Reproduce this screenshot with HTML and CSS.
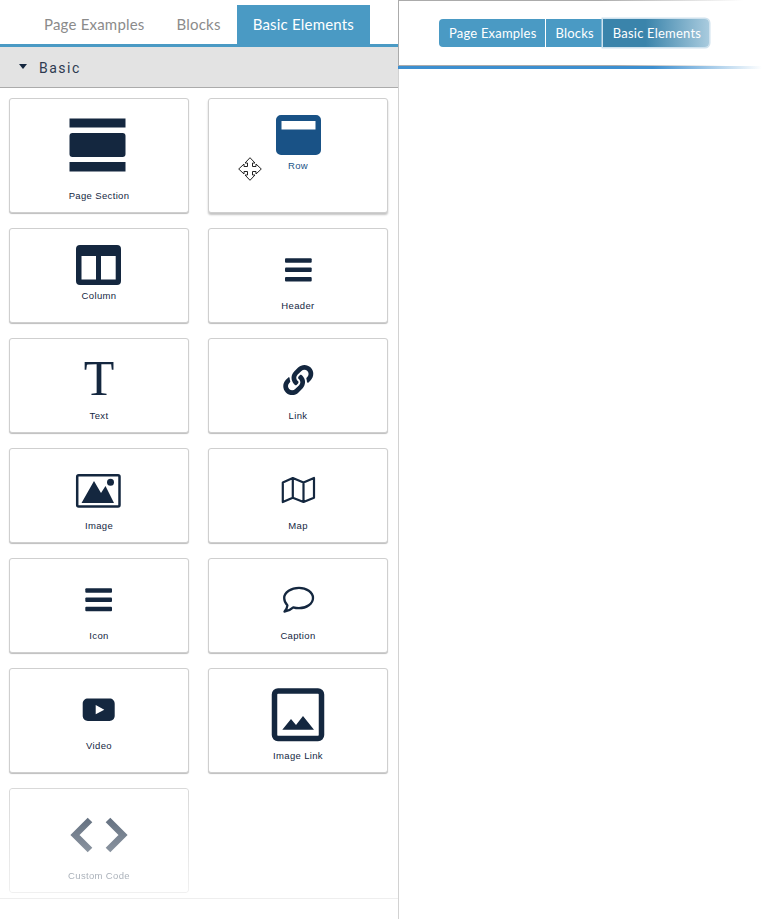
FILE: index.html
```html
<!DOCTYPE html>
<html lang="en">
<head>
<meta charset="utf-8">
<title>Basic Elements</title>
<link rel="stylesheet" href="styles.css">
</head>
<body>
<div class="app">
  <aside class="panel">
    <nav class="tabs">
      <a class="tab">Page Examples</a>
      <a class="tab">Blocks</a>
      <a class="tab tab-active">Basic Elements</a>
    </nav>
    <header class="section-head"><span class="caret"></span><span class="section-title">Basic</span></header>
    <div class="grid">
      <div class="card">
        <svg class="ico" width="60" height="70" viewBox="69 115 60 70"><rect x="69.5" y="118.5" width="56" height="9"/><rect x="69.5" y="133" width="56" height="24" rx="3"/><rect x="69.5" y="162" width="56" height="9.5"/></svg>
        <span class="label">Page Section</span>
      </div>
      <div class="card card-drag">
        <svg class="ico-row" width="60" height="40" viewBox="268 115 60 40"><path fill-rule="evenodd" d="M281 115h35a5 5 0 0 1 5 5v30a5 5 0 0 1-5 5h-35a5 5 0 0 1-5-5v-30a5 5 0 0 1 5-5zM281.500 121v8.500h34V121z"/></svg>
        <span class="label label-row">Row</span>
        <svg class="move" width="24" height="24" viewBox="0 0 24 24"><path d="M12 .7 17 6H14.500V9.500H18V7L23.300 12 18 17V14.500H14.500V18H17L12 23.300 7 18H9.500V14.500H6V17L.7 12 6 7V9.500H9.500V6H7Z"/></svg>
      </div>
      <div class="card">
        <svg class="ico" width="60" height="40" viewBox="69 245 60 40"><path fill-rule="evenodd" d="M80 245h37a4 4 0 0 1 4 4v32a4 4 0 0 1-4 4H80a4 4 0 0 1-4-4v-32a4 4 0 0 1 4-4zM81.500 256v23.500H96V256zM101 256v23.500h14.700V256z"/></svg>
        <span class="label">Column</span>
      </div>
      <div class="card">
        <svg class="ico" width="60" height="50" viewBox="268 245 60 50"><rect x="285" y="258.300" width="26.700" height="4.400" rx="1"/><rect x="285" y="267.500" width="26.700" height="4.600" rx="1"/><rect x="285" y="277" width="26.700" height="4.400" rx="1"/></svg>
        <span class="label">Header</span>
      </div>
      <div class="card">
        <div class="ico-t">T</div>
        <span class="label">Text</span>
      </div>
      <div class="card">
        <svg class="ico" width="60" height="50" viewBox="268 355 60 50"><g transform="translate(283.300 365) scale(.0586)"><path d="M326.612 185.391c59.747 59.809 58.927 155.698.36 214.590-.11.12-.24.25-.36.37l-67.200 67.200c-59.270 59.270-155.699 59.262-214.960 0-59.270-59.260-59.270-155.700 0-214.960l37.106-37.106c9.840-9.840 26.786-3.300 27.294 10.606.648 17.722 3.826 35.527 9.690 52.721 1.986 5.822.567 12.262-3.783 16.612l-13.087 13.087c-28.026 28.026-28.905 73.660-1.155 101.960 28.024 28.579 74.086 28.749 102.325.51l67.200-67.190c28.191-28.191 28.073-73.757 0-101.830-3.701-3.694-7.429-6.564-10.341-8.569a16.037 16.037 0 0 1-6.947-12.606c-.396-10.567 3.348-21.456 11.698-29.806l21.054-21.055c5.521-5.521 14.182-6.199 20.584-1.731a152.482 152.482 0 0 1 20.522 17.197zM467.547 44.449c-59.261-59.262-155.690-59.270-214.960 0l-67.200 67.200c-.12.12-.25.25-.36.37-58.566 58.892-59.387 154.781.36 214.590a152.454 152.454 0 0 0 20.521 17.196c6.402 4.468 15.064 3.789 20.584-1.731l21.054-21.055c8.350-8.350 12.094-19.239 11.698-29.806a16.037 16.037 0 0 0-6.947-12.606c-2.912-2.005-6.640-4.875-10.341-8.569-28.073-28.073-28.191-73.639 0-101.830l67.200-67.190c28.239-28.239 74.300-28.069 102.325.51 27.750 28.300 26.872 73.934-1.155 101.960l-13.087 13.087c-4.350 4.350-5.769 10.790-3.783 16.612 5.864 17.194 9.042 34.999 9.690 52.721.509 13.906 17.454 20.446 27.294 10.606l37.106-37.106c59.271-59.259 59.271-155.699.001-214.959z"/></g></svg>
        <span class="label">Link</span>
      </div>
      <div class="card">
        <svg class="ico" width="60" height="50" viewBox="69 465 60 50"><rect class="line" x="77.200" y="475.200" width="42.300" height="31.300" rx="1.500" stroke-width="2.500"/><path d="M81.500 503 94 481 101 493 105.500 486 114 503z"/><circle cx="110.500" cy="482.300" r="3.500"/></svg>
        <span class="label">Image</span>
      </div>
      <div class="card">
        <svg class="ico" width="60" height="50" viewBox="268 465 60 50"><path class="line" stroke-width="2.200" stroke-linejoin="round" d="M282.800 482.500 292.800 478 303.500 482.500 314 478V497.700L303.500 502 292.800 497.700 282.800 502zM292.800 478V497.700M303.500 482.500V502"/></svg>
        <span class="label">Map</span>
      </div>
      <div class="card">
        <svg class="ico" width="60" height="50" viewBox="69 575 60 50"><rect x="85.300" y="588.300" width="26.700" height="4.400" rx="1"/><rect x="85.300" y="597.500" width="26.700" height="4.600" rx="1"/><rect x="85.300" y="606.800" width="26.700" height="4.400" rx="1"/></svg>
        <span class="label">Icon</span>
      </div>
      <div class="card">
        <svg class="ico" width="60" height="50" viewBox="268 575 60 50"><path class="line" stroke-width="2.300" stroke-linejoin="round" d="M299 587.800c7.500 0 14 4.500 14 10.200s-6.500 10.200-14 10.200c-2 0-4-.3-5.700-.9-2.500 2.300-5.300 3.700-8.800 4.300 1.700-1.700 2.700-3.700 2.900-6.300-2-1.900-3.200-4.500-3.200-7.300 0-5.700 7-10.200 14.800-10.200z"/></svg>
        <span class="label">Caption</span>
      </div>
      <div class="card">
        <svg class="ico" width="60" height="50" viewBox="69 685 60 50"><path fill-rule="evenodd" d="M88 698.500h21.500c3 0 5.200 2 5.200 5.200v12c0 3-2.200 5.200-5.200 5.200H88c-3 0-5.300-2.200-5.300-5.200v-12c0-3.200 2.300-5.200 5.300-5.200zM95.700 705v9.300l8.600-4.600z"/></svg>
        <span class="label">Video</span>
      </div>
      <div class="card">
        <svg class="ico" width="60" height="60" viewBox="268 685 60 60"><rect class="line" x="274.500" y="691" width="47" height="47.500" rx="3.500" stroke-width="5.500"/><path d="M282.300 729.700 291 719 296 725 303 716 314 729.700z"/></svg>
        <span class="label">Image Link</span>
      </div>
      <div class="card card-fade">
        <svg class="ico-code" width="60" height="60" viewBox="69 805 60 60"><path d="M90 820 75 835 90 850M108 820 123 835 108 850"/></svg>
        <span class="label">Custom Code</span>
      </div>
    </div>
    <div class="panel-end"></div>
  </aside>
  <main class="stage">
    <div class="top-line"></div>
    <div class="toolbar">
      <div class="btn-group">
        <a class="btn btn-first">Page Examples</a>
        <a class="btn">Blocks</a>
        <a class="btn btn-active">Basic Elements</a>
      </div>
    </div>
    <div class="rule"></div>
  </main>
</div>
</body>
</html>
```
FILE: styles.css
```css
* { box-sizing: border-box; }
html, body { margin: 0; padding: 0; background: #fff; }
body { font-family: "Lato", "Liberation Sans", sans-serif; overflow: hidden; }
.app { display: flex; height: 919px; }
.panel { width: 399px; flex: none; border-right: 1px solid #d2d2d2; }
.tabs { display: flex; height: 47px; padding: 5px 0 0 28px; border-bottom: 3px solid #4a9ac4; }
.tab { display: flex; align-items: center; padding: 0 16px 2px; height: 39px; font-size: 15px; letter-spacing: .2px; color: #8b8b8b; }
.tab-active { background: #4a9ac4; color: #fff; }
.section-head { display: flex; align-items: center; height: 41px; padding: 0 0 1px 19px; background: #e3e3e3; border-bottom: 1px solid #ababab; }
.caret { width: 0; height: 0; border-left: 4.500px solid transparent; border-right: 4.500px solid transparent; border-top: 5px solid #14273f; margin: 0 12px 1px 0; }
.section-title { margin-top: 2px; font-family: "Roboto", sans-serif; font-size: 14px; letter-spacing: 1.500px; color: #2e3a50; }
.grid { display: grid; grid-template-columns: 180px 180px; column-gap: 19px; row-gap: 15px; padding: 10px 0 5px 9px; }
.card { position: relative; display: flex; flex-direction: column; align-items: center; padding: 16px 0 11px; background: #fff; border: 1px solid #cfcfcf; border-radius: 3px; box-shadow: 0 1px 1px #bdbdbd; }
.card-drag { box-shadow: 0 2px 2px #c4c4c4; }
.card-fade { box-shadow: none; -webkit-mask-image: linear-gradient(rgba(0,0,0,.8), rgba(0,0,0,.3)); mask-image: linear-gradient(rgba(0,0,0,.8), rgba(0,0,0,.3)); }
.label { margin-top: 4px; padding-top: 1px; height: 12px; font-family: "Liberation Sans", Arial, sans-serif; font-size: 9.500px; line-height: 12px; letter-spacing: .35px; color: #14273f; }
.label-row { color: #195286; }
.ico { display: block; fill: #14273f; }
.ico-row { display: block; fill: #195286; }
.ico .line { fill: none; stroke: #14273f; }
.ico-t { height: 50px; font-family: "Liberation Serif", "Times New Roman", serif; font-size: 50px; line-height: 46px; color: #14273f; }
.ico-code { display: block; fill: none; stroke: #14273f; stroke-width: 6.500; }
.move { position: absolute; left: 29px; top: 58px; fill: #fff; stroke: #222; stroke-width: 1; }
.panel-end { border-top: 1px solid #eee; }
.stage { flex: 1; min-width: 0; }
.top-line { position: relative; margin-left: -1px; height: 1px; background: linear-gradient(90deg, #ababab, #ababab 55%, rgba(171,171,171,0) 95%); }
.toolbar { position: relative; margin-left: -1px; height: 64px; padding: 18px 0 0 40px; background: #fff; border-left: 1px solid #ababab; }
.btn-group { display: flex; width: max-content; }
.btn { display: flex; align-items: center; height: 28px; padding: 0 8px 1px 10px; font-size: 13px; letter-spacing: .2px; color: #fff; background: #4a9ac4; border-right: 1px solid #fff; }
.btn-first { border-radius: 4px 0 0 4px; }
.btn-active { border-right: 0; border-radius: 0 4px 4px 0; background: linear-gradient(90deg, #3a84ab, #3a84ab 40%, #a9cbde); box-shadow: 0 0 0 1.500px #cfe2ee; }
.rule { position: relative; margin-left: -1px; height: 4px; background: linear-gradient(90deg, #ababab, #ababab 60%, rgba(171,171,171,0) 90%) top / 100% 1px no-repeat, linear-gradient(90deg, #3d8fd0, #3d8fd0 70%, rgba(61,143,208,0) 100%) bottom / 100% 3px no-repeat; }
```
